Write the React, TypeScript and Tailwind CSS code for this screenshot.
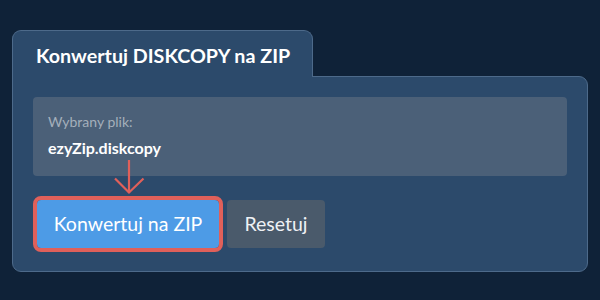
export default function App() {
  return (
    <div
      className="w-[600px] h-[300px] bg-[#0f2238] pl-[12px] pt-[30px] overflow-hidden"
      style={{ fontFamily: "Lato, 'Open Sans', sans-serif" }}
    >
      <div className="w-[576px]">
        <div className="relative z-10 -mb-px w-[301px] h-[47px] bg-[#2c4a6b] border border-b-0 border-[#4d6a8a] rounded-t-[9px] pl-[23px] pt-[13px]">
          <h1 className="text-[19.7px] leading-[24px] font-bold text-white">Konwertuj DISKCOPY na ZIP</h1>
        </div>
        <div className="relative bg-[#2c4a6b] border border-[#4d6a8a] rounded-[9px] rounded-tl-none px-[20px] pt-[20px] pb-[23px]">
          <div className="bg-[#4b6078] rounded-[4px] px-[15px] pt-[15px] pb-[15px] h-[79px]">
            <p className="text-[14px] leading-[20px] text-[#a4afbb]">Wybrany plik:</p>
            <p className="mt-[4px] text-[16px] leading-[24px] font-bold text-white">ezyZip.diskcopy</p>
          </div>
          <div className="flex gap-[8px] mt-[24px] pl-[4px]">
            <button className="h-[48px] w-[182px] bg-[#4d9be6] rounded-[4px] outline-4 outline-[#e0605a] text-[19.5px] text-white">
              Konwertuj na ZIP
            </button>
            <button className="h-[48px] w-[98px] bg-[#4a5a6b] rounded-[4px] text-[19.5px] text-[#eef1f4]">
              Resetuj
            </button>
          </div>
          <svg
            className="absolute left-[100px] top-[82px]"
            width="34"
            height="38"
            viewBox="0 0 34 38"
            fill="none"
            stroke="#e0605a"
            strokeWidth="2.2"
          >
            <path d="M16 1 V34" />
            <path d="M2 19.5 L16 33.5 L30.5 19.5" />
          </svg>
        </div>
      </div>
    </div>
  );
}
